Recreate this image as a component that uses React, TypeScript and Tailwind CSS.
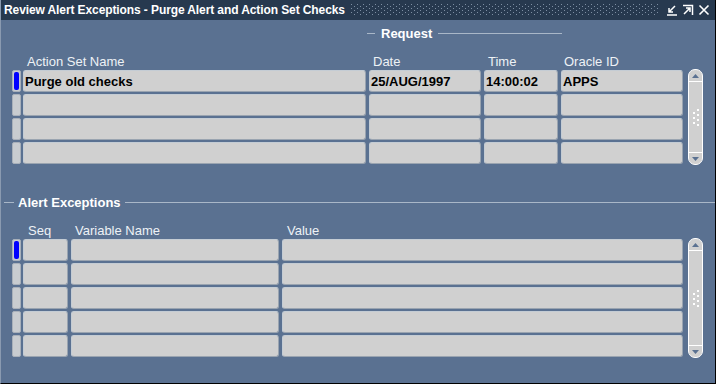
const font = { fontFamily: '"Liberation Sans", Arial, sans-serif' };

function Field({ w, text }: { w: string; text?: string }) {
  return (
    <div
      className={`${w} h-[22px] shrink-0 rounded-[3px] border border-[#9aa4b0] border-t-[#c4ccd4] border-l-[#c4ccd4] bg-[#d0d0d0] px-[1px] flex items-center text-[13px] font-bold text-black leading-none`}
    >
      {text}
    </div>
  );
}

function Indicator({ active }: { active?: boolean }) {
  return (
    <div className="w-[9px] h-[22px] shrink-0 rounded-[2px] border border-[#a8b0ba] bg-[#c8ccd0] p-[1px]">
      {active && <div className="w-full h-full rounded-[2px] bg-[#0000ff]" />}
    </div>
  );
}

function ScrollBar({ h }: { h: string }) {
  return (
    <div className={`w-[15px] ${h} shrink-0 rounded-t-[7px] rounded-b-[7px] border border-white bg-[#d0d0d0] flex flex-col`}>
      <div className="h-[12px] border-b border-white flex items-center justify-center">
        <svg width="7" height="4" viewBox="0 0 7 4">
          <path d="M0 4 L3.5 0 L7 4 Z" fill="#5a7191" />
        </svg>
      </div>
      <div className="flex-1 flex items-center justify-center">
        <svg width="8" height="18" viewBox="0 0 8 18">
          <g fill="#ffffff">
            <rect x="5" y="1" width="2" height="2" />
            <rect x="1" y="4" width="2" height="2" />
            <rect x="5" y="6" width="2" height="2" />
            <rect x="1" y="9" width="2" height="2" />
            <rect x="5" y="11" width="2" height="2" />
            <rect x="1" y="14" width="2" height="2" />
            <rect x="5" y="16" width="2" height="2" />
          </g>
        </svg>
      </div>
      <div className="h-[12px] border-t border-white flex items-center justify-center">
        <svg width="7" height="4" viewBox="0 0 7 4">
          <path d="M0 0 L7 0 L3.5 4 Z" fill="#5a7191" />
        </svg>
      </div>
    </div>
  );
}

export default function App() {
  const topRows = [
    { name: "Purge old checks", date: "25/AUG/1997", time: "14:00:02", oid: "APPS" },
    {},
    {},
    {},
  ] as { name?: string; date?: string; time?: string; oid?: string }[];

  return (
    <div
      className="w-[716px] h-[384px] bg-[#5a7191] border-r border-b border-black border-l border-l-[#8a9ab0] flex flex-col overflow-hidden"
      style={font}
    >
      {/* TITLE BAR */}
      <div className="h-[20px] shrink-0 bg-[#27394f] flex items-center pl-[3px] pr-[3px]">
        <span className="text-white text-[12px] font-bold whitespace-nowrap leading-none tracking-[-0.1px]">
          Review Alert Exceptions - Purge Alert and Action Set Checks
        </span>
        <svg className="ml-[6px] shrink-0" width="308" height="12">
          <defs>
            <pattern id="dots" width="6" height="4" patternUnits="userSpaceOnUse">
              <rect x="0" y="0" width="1" height="1" fill="#7d8ea3" />
              <rect x="3" y="2" width="1" height="1" fill="#7d8ea3" />
            </pattern>
          </defs>
          <rect x="0" y="0" width="308" height="12" fill="url(#dots)" />
        </svg>
        <div className="flex-1" />
        <div className="flex items-center gap-[4px] pr-[2px]">
          <svg width="12" height="12" viewBox="0 0 12 12">
            <path d="M9 2 L3 8 M3 4 L3 8 L7 8 M1 11 L11 11" stroke="#ffffff" strokeWidth="1.5" fill="none" />
          </svg>
          <svg width="12" height="12" viewBox="0 0 12 12">
            <path d="M2 10 L8 4 M4 4 L8 4 L8 8 M1 1.5 L10.5 1.5 L10.5 11" stroke="#ffffff" strokeWidth="1.5" fill="none" />
          </svg>
          <svg width="12" height="12" viewBox="0 0 12 12">
            <path d="M1.5 1.5 L10.5 10.5 M10.5 1.5 L1.5 10.5" stroke="#ffffff" strokeWidth="1.6" fill="none" />
          </svg>
        </div>
      </div>

      {/* REQUEST GROUP LABEL */}
      <div className="mt-[5px] h-[16px] flex items-center pl-[366px]">
        <div className="w-[8px] h-px bg-[#a9b7c8]" />
        <span className="mx-[6px] text-white text-[13px] font-bold leading-none">Request</span>
        <div className="w-[124px] h-px bg-[#a9b7c8]" />
      </div>

      {/* TOP HEADERS */}
      <div className="mt-[12px] h-[17px] flex items-center text-[13px] text-[#eef2f6] leading-none">
        <span className="ml-[26px] w-[346px]">Action Set Name</span>
        <span className="w-[115px]">Date</span>
        <span className="w-[76px]">Time</span>
        <span>Oracle ID</span>
      </div>

      {/* TOP TABLE */}
      <div className="flex">
        <div className="flex flex-col gap-[2px] ml-[11px]">
          {topRows.map((r, i) => (
            <div key={i} className="flex gap-[3px]">
              <Indicator active={i === 0} />
              <Field w="w-[343px] ml-[-1px]" text={r.name} />
              <Field w="w-[112px]" text={r.date} />
              <Field w="w-[74px]" text={r.time} />
              <Field w="w-[122px]" text={r.oid} />
            </div>
          ))}
        </div>
        <div className="ml-[5px] mt-[-1px]">
          <ScrollBar h="h-[96px]" />
        </div>
      </div>

      {/* ALERT EXCEPTIONS GROUP LABEL */}
      <div className="mt-[29px] h-[16px] flex items-center pl-[3px]">
        <div className="w-[10px] h-px bg-[#a9b7c8]" />
        <span className="mx-[4px] text-white text-[13px] font-bold leading-none">Alert Exceptions</span>
        <div className="flex-1 h-px bg-[#a9b7c8]" />
      </div>

      {/* BOTTOM HEADERS */}
      <div className="mt-[12px] h-[17px] flex items-center text-[13px] text-[#eef2f6] leading-none">
        <span className="ml-[27px] w-[47px]">Seq</span>
        <span className="w-[212px]">Variable Name</span>
        <span>Value</span>
      </div>

      {/* BOTTOM TABLE */}
      <div className="flex">
        <div className="flex flex-col gap-[2px] ml-[11px]">
          {[0, 1, 2, 3, 4].map((i) => (
            <div key={i} className="flex gap-[3px]">
              <Indicator active={i === 0} />
              <Field w="w-[45px] ml-[-1px]" />
              <Field w="w-[208px]" />
              <Field w="w-[401px]" />
            </div>
          ))}
        </div>
        <div className="ml-[5px] mt-[-1px]">
          <ScrollBar h="h-[120px]" />
        </div>
      </div>
    </div>
  );
}
